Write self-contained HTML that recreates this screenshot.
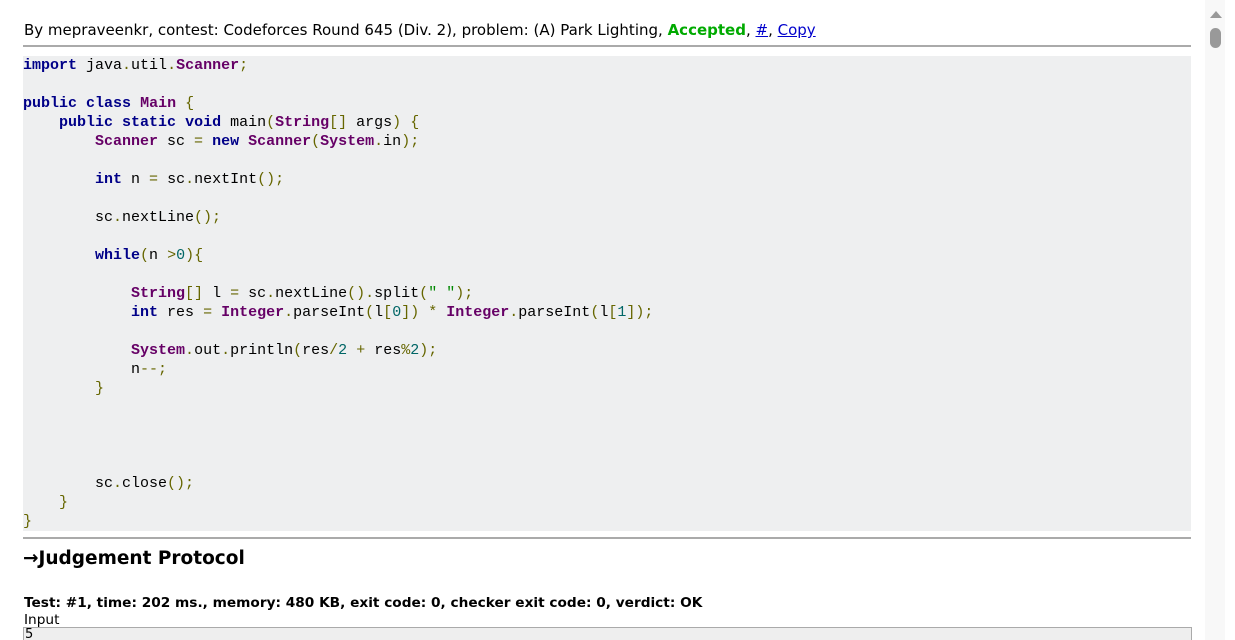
<!DOCTYPE html>
<html><head><meta charset="utf-8"><style>
html,body{margin:0;padding:0;background:#fff;width:1235px;height:640px;overflow:hidden}
body{font-family:"DejaVu Sans","Liberation Sans",sans-serif;color:#000;position:relative}
.top{position:absolute;left:24px;top:21px;font-size:15px;white-space:nowrap}
.top b{color:#0a0}
.top a{color:#00c;text-decoration:underline}
.hr{position:absolute;left:23px;width:1168px;height:2px;background:#aaa}
pre{position:absolute;left:23px;top:56px;width:1168px;height:475px;margin:0;background:#eeeff0;font-family:"Liberation Mono",monospace;font-size:15px;line-height:19px;color:#000}
.k{color:#008;font-weight:bold}.t{color:#606;font-weight:bold}.p{color:#660}.n{color:#066}.s{color:#080}
h2{position:absolute;left:23px;top:548px;margin:0;font-size:18.5px;font-weight:bold}
.test{position:absolute;left:24px;top:595px;font-size:13.7px;font-weight:bold;white-space:nowrap}
.inp{position:absolute;left:24px;top:612px;font-size:13.7px}
.box{position:absolute;left:23px;top:627px;width:1166px;height:20px;border:1px solid #aaa;background:#eee;font-size:13px;line-height:14px;padding-left:1px}
.sb{position:absolute;left:1205px;top:0;width:20px;height:640px;background:#f8f8f8}
.arr{position:absolute;left:1210px;top:11px;width:0;height:0;border-left:6px solid transparent;border-right:6px solid transparent;border-bottom:7px solid #999}
.th{position:absolute;left:1210px;top:28px;width:11px;height:20px;border-radius:6px;background:#999}
</style></head><body>
<div class="top">By mepraveenkr, contest: Codeforces Round 645 (Div. 2), problem: (A) Park Lighting, <b>Accepted</b>, <a>#</a>, <a>Copy</a></div>
<div class="hr" style="top:45px"></div>
<pre><span class="k">import</span> java<span class="p">.</span>util<span class="p">.</span><span class="t">Scanner</span><span class="p">;</span>

<span class="k">public</span> <span class="k">class</span> <span class="t">Main</span> <span class="p">{</span>
    <span class="k">public</span> <span class="k">static</span> <span class="k">void</span> main<span class="p">(</span><span class="t">String</span><span class="p">[]</span> args<span class="p">)</span> <span class="p">{</span>
        <span class="t">Scanner</span> sc <span class="p">=</span> <span class="k">new</span> <span class="t">Scanner</span><span class="p">(</span><span class="t">System</span><span class="p">.</span>in<span class="p">);</span>

        <span class="k">int</span> n <span class="p">=</span> sc<span class="p">.</span>nextInt<span class="p">();</span>

        sc<span class="p">.</span>nextLine<span class="p">();</span>

        <span class="k">while</span><span class="p">(</span>n <span class="p">&gt;</span><span class="n">0</span><span class="p">){</span>

            <span class="t">String</span><span class="p">[]</span> l <span class="p">=</span> sc<span class="p">.</span>nextLine<span class="p">().</span>split<span class="p">(</span><span class="s">" "</span><span class="p">);</span>
            <span class="k">int</span> res <span class="p">=</span> <span class="t">Integer</span><span class="p">.</span>parseInt<span class="p">(</span>l<span class="p">[</span><span class="n">0</span><span class="p">])</span> <span class="p">*</span> <span class="t">Integer</span><span class="p">.</span>parseInt<span class="p">(</span>l<span class="p">[</span><span class="n">1</span><span class="p">]);</span>

            <span class="t">System</span><span class="p">.</span>out<span class="p">.</span>println<span class="p">(</span>res<span class="p">/</span><span class="n">2</span> <span class="p">+</span> res<span class="p">%</span><span class="n">2</span><span class="p">);</span>
            n<span class="p">--;</span>
        <span class="p">}</span>




        sc<span class="p">.</span>close<span class="p">();</span>
    <span class="p">}</span>
<span class="p">}</span></pre>
<div class="hr" style="top:537px"></div>
<h2>→Judgement Protocol</h2>
<div class="test">Test: #1, time: 202 ms., memory: 480 KB, exit code: 0, checker exit code: 0, verdict: OK</div>
<div class="inp">Input</div>
<div class="box">5</div>
<div class="sb"></div><div class="arr"></div><div class="th"></div>
</body></html>
